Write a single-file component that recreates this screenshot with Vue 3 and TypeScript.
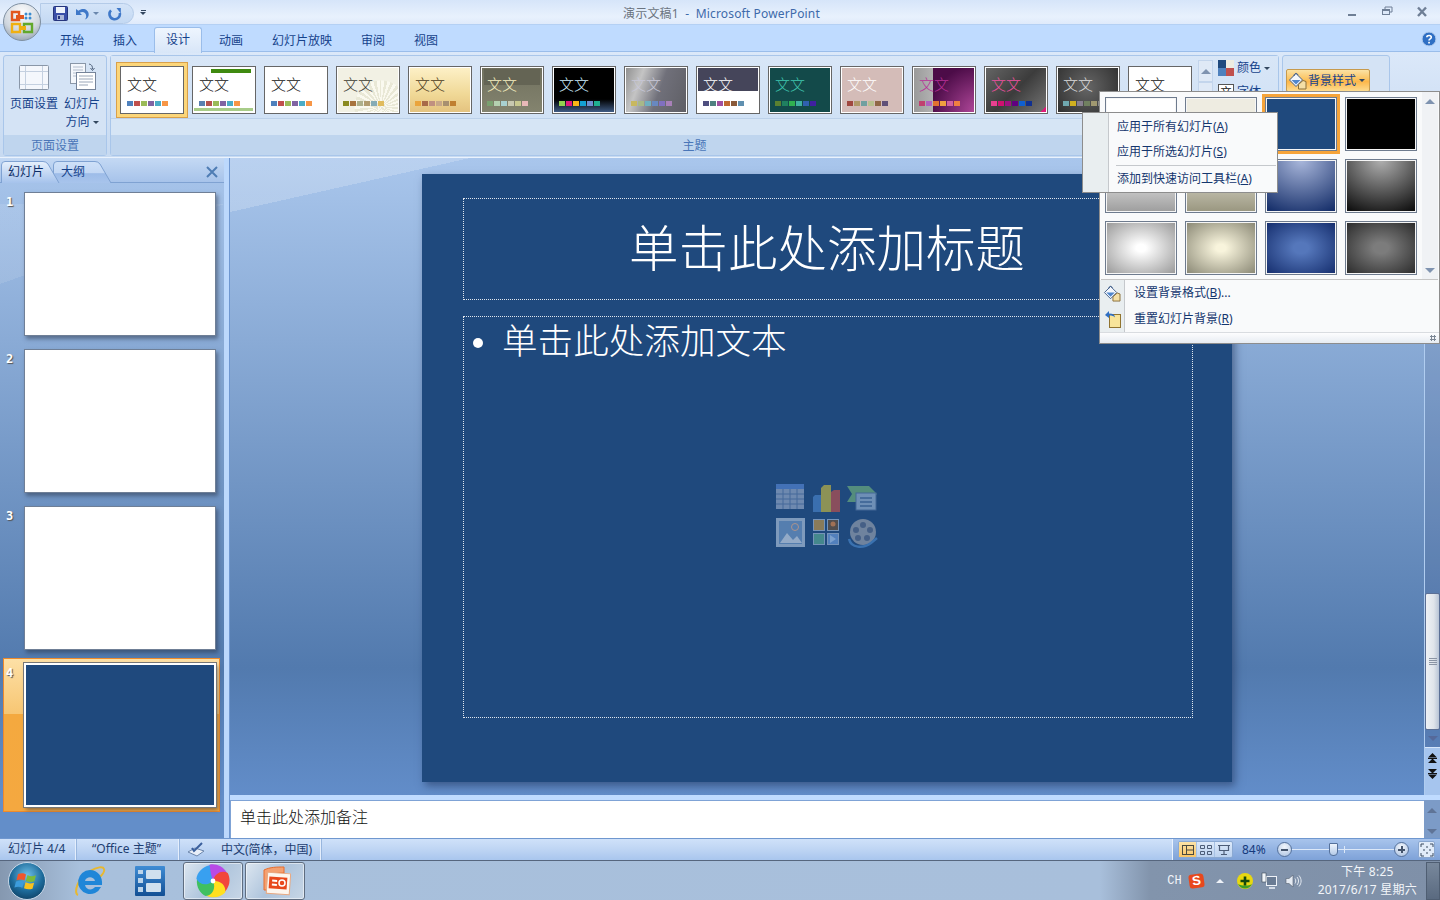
<script setup lang="ts">
interface Theme {
  bg: string
  color: string
  swatches: string[]
}

const office = ['#4f81bd', '#c0504d', '#9bbb59', '#8064a2', '#4bacc6', '#f79646']

const themes: Theme[] = [
  { bg: '#fff', color: '#111', swatches: office },
  { bg: 'linear-gradient(#3f8a10,#3f8a10) 18px 2px/40px 4px no-repeat, linear-gradient(#a8cc88,#a8cc88) 0 41px/60px 3px no-repeat, #fff', color: '#111', swatches: ['#5a80b0', '#b5524f', '#9bbb59', '#8064a2', '#4bacc6', '#f79646'] },
  { bg: '#fff', color: '#111', swatches: office },
  { bg: 'radial-gradient(circle at 44px 40px, transparent 26px, #f2f1e4 27px), repeating-conic-gradient(from 0deg at 44px 40px, #faf9ef 0 7deg, #e9e8d6 7deg 14deg)', color: '#3a3a30', swatches: ['#8a8a20', '#a8743f', '#aeb08c', '#b19c6f', '#86acb6', '#e0bb5c'] },
  { bg: 'linear-gradient(#fdf1c8, #f0d896 60%, #e4c27e)', color: '#4a3a20', swatches: ['#eaa43c', '#a86a48', '#c09080', '#c8a888', '#a89070', '#c07f30'] },
  { bg: 'linear-gradient(#62625200, #62625200), linear-gradient(#646454,#646454) 3px 2px/56px 16px no-repeat, linear-gradient(#70705e, #84846f)', color: '#f6f0c0', swatches: ['#7aa070', '#b4d0b0', '#a8d0d0', '#c8c8b0', '#c8c890', '#e8b8b8'] },
  { bg: 'linear-gradient(#000 70%, #44628e)', color: '#cfefff', swatches: ['#92d050', '#e01a7c', '#fbb516', '#14a0d4', '#6f8fd0', '#20b090'] },
  { bg: 'linear-gradient(110deg, #8d8d8d, #c4c4c4 25%, #70707a 55%, #5e5e64)', color: '#c8c8d8', swatches: ['#c8b860', '#a8b888', '#70b0c0', '#6888c0', '#8070c0', '#a880b8'] },
  { bg: 'linear-gradient(#45455a 52%, #fff 52%)', color: '#fff', swatches: ['#4f4f80', '#4f8080', '#a050a0', '#c06830', '#8a5a3a', '#6090b0'] },
  { bg: '#134a4a', color: '#40c8b0', swatches: ['#5a8030', '#208060', '#30b050', '#40b0a0', '#3060b0', '#4020a0'] },
  { bg: '#d4bcb8', color: '#fff', swatches: ['#a04840', '#b09868', '#70a0a0', '#b8c090', '#906848', '#605078'] },
  { bg: 'radial-gradient(circle at 46px 46px, #b84ca0, #4c0c48 75%) 20px 0/44px 48px no-repeat, linear-gradient(90deg, #999, #e8e8e8)', color: '#b83098', swatches: ['#c04070', '#b060c0', '#e07030', '#f0a040', '#d060a0', '#f08040'] },
  { bg: 'linear-gradient(315deg, #e01878 7%, transparent 7%), linear-gradient(135deg, #666, #3c3c3c 50%, #777)', color: '#f050a0', swatches: ['#e84090', '#d01070', '#a01080', '#600080', '#1060d0', '#103090'] },
  { bg: 'radial-gradient(circle at 30px 20px, #666, #2c2c2c)', color: '#ddd', swatches: ['#70a8b0', '#d0b020', '#888090', '#708060', '#a09870', '#888'] },
  { bg: '#fff', color: '#111', swatches: office },
]

const backgrounds = [
  '#fff',
  '#eeece1',
  '#1f497d',
  '#000',
  'linear-gradient(#fff, #9d9d9d)',
  'linear-gradient(#eeece1, #99967f)',
  'radial-gradient(ellipse 90% 110% at 50% 0, #aab8dc, #17306b)',
  'radial-gradient(ellipse 90% 110% at 50% 0, #b0b0b0, #111)',
  'radial-gradient(ellipse at 50% 50%, #fff 10%, #9c9c9c 95%)',
  'radial-gradient(ellipse at 50% 50%, #f8f4dc 10%, #8d8b78 95%)',
  'radial-gradient(ellipse at 50% 50%, #5577bb 15%, #173070 95%)',
  'radial-gradient(ellipse at 50% 50%, #7c7c7c 15%, #2e2e2e 95%)',
]

const petals = [
  { color: '#b94ae6', angle: 0 },
  { color: '#f2463c', angle: 72 },
  { color: '#ffe01f', angle: 144 },
  { color: '#3fc060', angle: 216 },
  { color: '#38a0f0', angle: 288 },
]

const tabs = ['开始', '插入', '设计', '动画', '幻灯片放映', '审阅', '视图']
const slides = [1, 2, 3, 4]
</script>

<template>
  <div class="window">
    <header class="titlebar">
      <div class="qat">
        <svg class="qat-icon" width="15" height="15" viewBox="0 0 15 15">
          <rect x="0.5" y="0.5" width="14" height="14" rx="1" fill="#3a4fa8" stroke="#26357c" />
          <rect x="3" y="1" width="9" height="6" fill="#eef3fb" />
          <rect x="4" y="9" width="7" height="5" fill="#aab6d8" />
          <rect x="5" y="10" width="2" height="3" fill="#26357c" />
        </svg>
        <svg class="qat-icon" width="14" height="14" viewBox="0 0 14 14">
          <path d="M1 2v6h6L4.8 5.8C7.4 4 11 5.2 11.2 9c.1 1.400-.5 2.600-1.400 3.600 2.600-.8 4-3 3.900-5.400C13.400 2.600 8 .2 3.400 3.800z" fill="#3f78c8" />
        </svg>
        <i class="caret qat-caret"></i>
        <svg class="qat-icon redo" width="14" height="14" viewBox="0 0 14 14">
          <path d="M3 3.400A5.200 5.200 0 1 0 11.800 6" fill="none" stroke="#3f78c8" stroke-width="2.600" />
          <path d="M8.500 1 12.800 1 12.800 6.500z" fill="#3f78c8" />
        </svg>
      </div>
      <span class="customize"><b></b><i class="caret dark"></i></span>
      <div class="title"><span class="doc">演示文稿1</span>&nbsp;&nbsp;-&nbsp;&nbsp;Microsoft PowerPoint</div>
      <div class="win-controls">
        <svg width="14" height="14" viewBox="0 0 14 14"><rect x="3" y="9" width="8" height="2" fill="#6f7f96" /></svg>
        <svg width="14" height="14" viewBox="0 0 14 14"><path d="M5 4V2h7v5h-2" fill="none" stroke="#6f7f96" /><rect x="2.500" y="4.500" width="7" height="5" fill="#dce8f8" stroke="#6f7f96" /><rect x="2" y="4" width="8" height="2" fill="#6f7f96" /></svg>
        <svg width="14" height="14" viewBox="0 0 14 14"><path d="M3 2.500 11 11M11 2.500 3 11" stroke="#6f7f96" stroke-width="2.400" /></svg>
      </div>
    </header>

    <nav class="tabs">
      <span v-for="tab in tabs" :key="tab" class="tab" :class="{ active: tab === '设计' }">{{ tab }}</span>
      <svg class="help" width="16" height="16" viewBox="0 0 16 16">
        <circle cx="8" cy="8" r="7" fill="#2f6fc4" stroke="#b8d0f0" />
        <path d="M5.800 6.200C6 4 10.300 4 10.300 6.300c0 1.600-2.300 1.500-2.300 3.200" fill="none" stroke="#fff" stroke-width="1.600" />
        <rect x="7.200" y="10.800" width="1.700" height="1.700" fill="#fff" />
      </svg>
    </nav>

    <section class="ribbon">
      <div class="group group-page">
        <div class="group-body page-tools">
          <div class="tool">
            <svg width="32" height="28" viewBox="0 0 32 28">
              <rect x="1.500" y="2.500" width="29" height="24" rx="1" fill="#f4f7fc" stroke="#8a97a8" />
              <path d="M7.500 3v23M24.500 3v23M2 8.500h28M2 21.500h28" stroke="#c4d0e0" fill="none" />
            </svg>
            <span>页面设置</span>
          </div>
          <div class="tool">
            <svg width="32" height="30" viewBox="0 0 32 30">
              <rect x="4.500" y="1.500" width="15" height="20" fill="#f4f7fc" stroke="#8a97a8" />
              <path d="M7 5h10M7 8h10M7 11h10M7 14h8" stroke="#b2bccb" />
              <rect x="10.500" y="10.500" width="19" height="17" fill="#fff" stroke="#76849a" />
              <path d="M13 14h14M13 17h14M13 20h14M13 23h9" stroke="#9aa6b8" />
              <path d="M23 2c3 .5 3.500 2.500 3.500 5M24.500 6l2 2.500L28.500 6" fill="none" stroke="#51637e" />
            </svg>
            <span>幻灯片<br />方向 <i class="caret dark"></i></span>
          </div>
        </div>
        <div class="group-label">页面设置</div>
      </div>

      <div class="group group-themes">
        <div class="group-body theme-row">
          <div
            v-for="(theme, index) in themes"
            :key="index"
            class="thumb"
            :class="{ selected: index === 0 }"
            :style="{ background: theme.bg, color: theme.color }"
          >
            <span class="thumb-text">文文</span>
            <div class="swatches">
              <i v-for="c in theme.swatches" :key="c" :style="{ background: c }"></i>
            </div>
          </div>
          <div class="gallery-arrows">
            <span class="arrow-btn"><i class="tri up"></i></span>
            <span class="arrow-btn"><i class="tri down"></i></span>
          </div>
          <div class="theme-options">
            <div class="theme-option">
              <svg width="16" height="16" viewBox="0 0 16 16">
                <rect width="16" height="16" fill="#fff" />
                <rect width="8" height="8" fill="#1f497d" />
                <rect x="8" width="8" height="8" fill="#eeece1" />
                <rect y="8" width="8" height="8" fill="#4f81bd" />
                <rect x="8" y="8" width="8" height="8" fill="#c0504d" />
              </svg>
              <span>颜色</span><i class="caret dark"></i>
            </div>
            <div class="theme-option">
              <span class="font-box">文</span>
              <span>字体</span><i class="caret dark"></i>
            </div>
          </div>
        </div>
        <div class="group-label">主题</div>
      </div>

      <div class="group group-bg">
        <div class="group-body">
          <button class="bg-btn">
            <svg width="19" height="18" viewBox="0 0 19 18">
              <path d="M8 1.500 1.500 8 8 14.500 14.500 8z" fill="#f4f7fc" stroke="#3f5c88" />
              <path d="M3.500 8h9L8 12.500z" fill="#4f86cc" />
              <path d="M6 4c0-3 3-3.500 4-1" fill="none" stroke="#3f5c88" />
              <path d="M10.500 12.500 15 8.500l3 1v7.500h-7.500z" fill="#f4dfa6" stroke="#8a6f3a" />
            </svg>
            <span>背景样式</span><i class="caret dark"></i>
          </button>
        </div>
      </div>
    </section>

    <main class="workspace">
      <aside class="side-pane">
        <div class="pane-tabs">
          <div class="pane-tab">
            <svg class="tab-shape" width="59" height="22" viewBox="0 0 59 22">
              <defs>
                <linearGradient id="tabOn" x1="0" y1="0" x2="0" y2="1">
                  <stop offset="0" stop-color="#e6f0fc" />
                  <stop offset="1" stop-color="#a6c3ec" />
                </linearGradient>
              </defs>
              <path d="M.5 22V4Q.5.500 4 .500H42Q45 .500 47 3L58 22" fill="url(#tabOn)" stroke="#7fa2d2" />
            </svg>
            <span class="on">幻灯片</span>
          </div>
          <div class="pane-tab second">
            <svg class="tab-shape" width="59" height="22" viewBox="0 0 59 22">
              <defs>
                <linearGradient id="tabOff" x1="0" y1="0" x2="0" y2="1">
                  <stop offset="0" stop-color="#cfe1f8" />
                  <stop offset=".55" stop-color="#c2d7f4" />
                  <stop offset=".56" stop-color="#9dbce8" />
                  <stop offset="1" stop-color="#a8c4ec" />
                </linearGradient>
              </defs>
              <path d="M.5 22V4Q.5.500 4 .500H42Q45 .500 47 3L58 22" fill="url(#tabOff)" stroke="#7fa2d2" />
            </svg>
            <span>大纲</span>
          </div>
          <svg class="pane-close" width="12" height="12" viewBox="0 0 12 12">
            <path d="M1 1 11 11M11 1 1 11" stroke="#4f7db4" stroke-width="2" />
          </svg>
        </div>
        <ul class="slide-list">
          <li v-for="n in slides" :key="n" class="slide-item" :class="{ current: n === 4 }">
            <span class="slide-num">{{ n }}</span>
            <div class="slide-thumb"></div>
          </li>
        </ul>
      </aside>
      <div class="splitter"></div>
      <div class="editor">
        <div class="editor-top">
          <div class="canvas">
            <article class="slide">
              <div class="holder holder-title">单击此处添加标题</div>
              <div class="holder holder-body">
                <div class="body-line"><i class="bullet"></i>单击此处添加文本</div>
                <div class="content-icons">
                  <svg width="104" height="66" viewBox="0 0 104 66">
                    <rect x="1" y="1" width="28" height="25" fill="#7c95b8" />
                    <rect x="1" y="1" width="28" height="5" fill="#4a78c0" />
                    <path d="M1 11h28M1 16h28M1 21h28M8 6v20M15 6v20M22 6v20" stroke="#4d6f9f" />
                    <path d="M38 14l2-2h6v17h-8z" fill="#3f76b8" />
                    <path d="M46 5l3-3h7v27H46z" fill="#9f9f50" />
                    <path d="M56 9l3-2h6v22h-9z" fill="#9c5058" />
                    <path d="M72 3h22l8 8-8 8H72l5-8z" fill="#5e9a7e" />
                    <rect x="81" y="10" width="20" height="17" fill="#7c9cc0" stroke="#486d9c" />
                    <path d="M85 15h12M85 19h12M85 23h12" stroke="#3e6596" stroke-width="1.500" />
                    <rect x="1" y="35" width="29" height="29" fill="#8fa9c8" />
                    <rect x="4" y="38" width="23" height="23" fill="#5f88b8" />
                    <path d="M5 60l7-10 6 7 4-4 5 7z" fill="#a8bcd4" />
                    <circle cx="20" cy="44" r="3.500" fill="none" stroke="#c4a090" />
                    <rect x="38.500" y="36.500" width="11" height="11" fill="#9c8454" stroke="#84a0c4" />
                    <rect x="52.500" y="36.500" width="11" height="11" fill="#5a5048" stroke="#84a0c4" />
                    <circle cx="58" cy="41" r="2.500" fill="#b87850" />
                    <rect x="38.500" y="50.500" width="11" height="11" fill="#4c9490" stroke="#84a0c4" />
                    <rect x="52.500" y="50.500" width="11" height="11" fill="#5b8ac8" stroke="#84a0c4" />
                    <path d="M55 52v8l6-4z" fill="#8cb0dc" />
                    <circle cx="88" cy="49" r="13" fill="#7e8ea4" />
                    <circle cx="88" cy="42" r="3" fill="#4c6488" /><circle cx="95" cy="47" r="3" fill="#4c6488" />
                    <circle cx="92" cy="55" r="3" fill="#4c6488" /><circle cx="83" cy="55" r="3" fill="#4c6488" />
                    <circle cx="81" cy="47" r="3" fill="#4c6488" />
                    <path d="M74 56c2 9 14 10 22 4l6-5" fill="none" stroke="#3f78b8" stroke-width="2.500" />
                  </svg>
                </div>
              </div>
            </article>
          </div>
          <div class="scrollbar">
            <div class="scroll-track"><span class="scroll-thumb"><b></b></span></div>
            <div class="scroll-down"><i class="tri down"></i></div>
            <div class="page-jump">
              <svg width="9" height="10" viewBox="0 0 9 10"><path d="M4.500 0 9 4.500H0zM0 5h9v1H0zM4.500 5.500 9 10H0z" fill="#111" /></svg>
              <svg width="9" height="10" viewBox="0 0 9 10"><path d="M0 0h9L4.500 4.500zM0 4h9v1H0zM0 5.500h9L4.500 10z" fill="#111" /></svg>
            </div>
          </div>
        </div>
        <div class="notes-row">
          <div class="notes">单击此处添加备注</div>
          <div class="notes-scroll"><i class="tri up"></i><i class="tri down"></i></div>
        </div>
      </div>
    </main>

    <footer class="statusbar">
      <span class="cell cell-count">幻灯片 4/4</span>
      <span class="cell cell-theme">“Office 主题”</span>
      <span class="cell cell-lang">
        <svg width="18" height="16" viewBox="0 0 18 16">
          <path d="M1 10l7-4 9 3-7 5z" fill="#e8eef8" stroke="#6c86ac" />
          <path d="M5 6l2 3 8-8" fill="none" stroke="#3a5f9c" stroke-width="2" />
        </svg>
        <span>中文(简体，中国)</span>
      </span>
      <div class="status-right">
        <div class="views">
          <span class="view on">
            <svg width="14" height="12" viewBox="0 0 14 12"><rect x="1.500" y="1.500" width="11" height="9" fill="none" stroke="#4a4a40" /><path d="M5.500 1v10M6 6h6" stroke="#4a4a40" /></svg>
          </span>
          <span class="view">
            <svg width="14" height="12" viewBox="0 0 14 12"><path d="M1.500 1.500h4v3h-4zM8.500 1.500h4v3h-4zM1.500 7.500h4v3h-4zM8.500 7.500h4v3h-4z" fill="none" stroke="#4c5d78" /></svg>
          </span>
          <span class="view">
            <svg width="14" height="12" viewBox="0 0 14 12"><path d="M1 1.500h12M2.500 2v4.500h9V2M7 7v3M4 10.500h6" fill="none" stroke="#4c5d78" stroke-width="1.200" /></svg>
          </span>
        </div>
        <span class="zoom-val">84%</span>
        <span class="round-btn"><b></b></span>
        <div class="zoom-slider"><span class="zoom-tick"></span><span class="zoom-thumb"></span></div>
        <span class="round-btn plus"><b></b></span>
        <span class="fit-btn">
          <svg width="14" height="14" viewBox="0 0 14 14"><path d="M1 4V1h3M10 1h3v3M13 10v3h-3M4 13H1v-3M7 3v2M7 9v2M3 7h2M9 7h2" fill="none" stroke="#3a4a60" /></svg>
        </span>
      </div>
    </footer>

    <footer class="taskbar">
      <svg class="start" width="40" height="40" viewBox="0 0 40 40">
        <defs>
          <radialGradient id="orb" cx=".5" cy=".35" r=".7">
            <stop offset="0" stop-color="#6fc0e8" />
            <stop offset=".6" stop-color="#1c6a9a" />
            <stop offset="1" stop-color="#0d3d60" />
          </radialGradient>
        </defs>
        <circle cx="20" cy="20" r="18.500" fill="url(#orb)" stroke="#c8d8e8" />
        <path d="M11 13c3-1 6-1 8 .5l-1.500 6c-2.500-1.300-5-1.400-8-.3z" fill="#f0562c" />
        <path d="M20.500 14c2.500 1.500 5 1.600 8.500.3l-1.600 6c-3 1-5.500 1-8.500-.4z" fill="#7cbb3a" />
        <path d="M9 20.500c3-1 5.500-1 8 .3l-1.600 6c-2.500-1.300-5-1.300-8-.3z" fill="#3c9cdc" />
        <path d="M18.500 21.300c2.800 1.400 5.500 1.500 8.600.4l-1.600 6c-3 1-5.600.8-8.500-.5z" fill="#f9c21e" />
      </svg>
      <div class="task-app ie">
        <svg width="36" height="36" viewBox="0 0 36 36">
          <path d="M6 32C1 30 6 14 18 8c7-4 13-5 14-2 1 2-2 6-4 8" fill="none" stroke="#e8b830" stroke-width="2" />
          <path d="M18 7a12 12 0 1 0 11 17h-6c-3 4-9 3-10-2h17c1-8-4-15-12-15zm-5 11c1-5 9-5 10 0z" fill="#1f86d8" fill-rule="evenodd" />
        </svg>
      </div>
      <div class="task-app film">
        <svg width="32" height="32" viewBox="0 0 32 32">
          <defs>
            <linearGradient id="filmBody" x1="0" y1="0" x2="0" y2="1">
              <stop offset="0" stop-color="#3f8cd4" />
              <stop offset="1" stop-color="#124f94" />
            </linearGradient>
          </defs>
          <rect x="1" y="1" width="30" height="30" rx="1" fill="url(#filmBody)" />
          <rect x="12" y="5" width="15" height="9" rx="1" fill="#d0e0ee" />
          <rect x="12" y="18" width="15" height="9" rx="1" fill="#d0e0ee" />
          <rect x="4" y="5" width="5" height="4" fill="#bcd4ea" /><rect x="4" y="13" width="5" height="5" fill="#bcd4ea" /><rect x="4" y="22" width="5" height="5" fill="#bcd4ea" />
        </svg>
      </div>
      <div class="task-btn">
        <svg width="34" height="34" viewBox="-17 -17 34 34">
          <path
            v-for="petal in petals"
            :key="petal.color"
            d="M0 0C-7-4-8-12-3-16.500 3-17.500 10-15 14-8 9-6 4-3 0 0z"
            :fill="petal.color"
            :transform="`rotate(${petal.angle})`"
          />
          <circle r="2.400" fill="#fff" />
        </svg>
      </div>
      <div class="task-btn">
        <svg width="32" height="30" viewBox="0 0 32 30">
          <path d="M5 4c6-3 13-3 20-3v6H12v17H5z" fill="#f4a070" stroke="#e86c2c" />
          <rect x="8" y="7" width="23" height="21" fill="#fdf6ee" stroke="#e8a880" transform="rotate(4 19 17)" />
          <rect x="10" y="11" width="18" height="12" fill="#e8481c" transform="rotate(4 19 17)" />
          <rect x="13" y="14" width="5" height="2" fill="#fff" transform="rotate(4 19 17)" />
          <rect x="13" y="18" width="5" height="2" fill="#fff" transform="rotate(4 19 17)" />
          <circle cx="23" cy="17" r="3" fill="none" stroke="#fff" stroke-width="1.500" />
        </svg>
      </div>
      <div class="tray">
        <span class="lang">CH</span>
        <span class="sogou">S</span>
        <i class="tray-up"></i>
        <svg width="18" height="18" viewBox="0 0 18 18">
          <circle cx="9" cy="9" r="8" fill="#e8d810" />
          <path d="M2 12c3 6 11 6 14 0-3 2-10 2-14 0z" fill="#3c9c28" />
          <path d="M9 4.500v9M4.500 9h9" stroke="#14480c" stroke-width="2.600" />
        </svg>
        <svg width="18" height="18" viewBox="0 0 18 18">
          <rect x="6.500" y="4.500" width="10" height="9" fill="#6a7c94" stroke="#eef2f8" />
          <path d="M9 16h6" stroke="#eef2f8" stroke-width="1.500" />
          <rect x="2" y="1" width="4" height="9" fill="#f0f4f8" stroke="#3a4656" stroke-width=".6" />
        </svg>
        <svg width="18" height="18" viewBox="0 0 18 18">
          <path d="M2 6.500h3L9 3v12l-4-3.500H2z" fill="#e4eaf2" stroke="#55606e" stroke-width=".6" />
          <path d="M11 6.500c1 1.500 1 3.500 0 5M13 5c2 2.500 2 5.500 0 8M15 3.500c2.800 3.500 2.800 7.500 0 11" fill="none" stroke="#e4eaf2" />
        </svg>
        <div class="clock"><span>下午 8:25</span><span>2017/6/17 星期六</span></div>
      </div>
      <div class="show-desktop"></div>
    </footer>

    <!-- orb and the two menus float over the window -->
    <svg class="office-orb" width="44" height="44" viewBox="0 0 44 44">
      <defs>
        <radialGradient id="pearl" cx=".5" cy=".25" r=".85">
          <stop offset="0" stop-color="#fdfdfd" />
          <stop offset=".6" stop-color="#cfd6de" />
          <stop offset="1" stop-color="#8a97a5" />
        </radialGradient>
      </defs>
      <circle cx="22" cy="22" r="18.500" fill="url(#pearl)" stroke="#7f90a2" />
      <path d="M12 12h7v8h-7z" fill="none" stroke="#e2571e" stroke-width="2.400" />
      <path d="M16 15h8v4h-8z" fill="#e2571e" />
      <circle cx="26" cy="14" r="1.500" fill="#3a8cd0" /><circle cx="30" cy="14" r="1.500" fill="#3a8cd0" /><circle cx="26" cy="18" r="1.500" fill="#3a8cd0" /><circle cx="30" cy="18" r="1.500" fill="#3a8cd0" />
      <path d="M24 24h8v8h-8z" fill="none" stroke="#62a82c" stroke-width="2.400" />
      <path d="M12 24h8v8h-8z" fill="none" stroke="#f0b010" stroke-width="2.400" />
      <path d="M20 26h6v4h-6z" fill="#f0b010" />
    </svg>

    <div class="bg-popup">
      <div class="bg-gallery">
        <div class="bg-grid">
          <div
            v-for="(bg, index) in backgrounds"
            :key="index"
            class="bg-cell"
            :class="{ selected: index === 2 }"
            :style="{ background: bg }"
          ></div>
        </div>
        <div class="bg-scroll"><i class="tri up"></i><i class="tri down"></i></div>
      </div>
      <div class="bg-menu">
        <div class="bg-item">
          <span class="bg-item-icon">
            <svg width="18" height="17" viewBox="0 0 19 18">
              <path d="M8 1.500 1.500 8 8 14.500 14.500 8z" fill="#f4f7fc" stroke="#3f5c88" />
              <path d="M3.500 8h9L8 12.500z" fill="#4f86cc" />
              <path d="M6 4c0-3 3-3.500 4-1" fill="none" stroke="#3f5c88" />
              <path d="M10.500 12.500 15 8.500l3 1v7.500h-7.500z" fill="#f4dfa6" stroke="#8a6f3a" />
            </svg>
          </span>
          <span>设置背景格式(<u>B</u>)...</span>
        </div>
        <div class="bg-item">
          <span class="bg-item-icon">
            <svg width="17" height="18" viewBox="0 0 17 18">
              <rect x="5.500" y="4.500" width="11" height="13" fill="#f8e49a" stroke="#917430" />
              <path d="M1 5l4-4v2.500c4 0 6 1.500 6 4-1-1.500-3-2-6-2V8z" fill="#2f6fc4" />
            </svg>
          </span>
          <span>重置幻灯片背景(<u>R</u>)</span>
        </div>
      </div>
      <div class="bg-footer"><i></i></div>
    </div>

    <div class="context-menu">
      <div class="ctx-item">应用于所有幻灯片(<u>A</u>)</div>
      <div class="ctx-item">应用于所选幻灯片(<u>S</u>)</div>
      <div class="ctx-sep"></div>
      <div class="ctx-item last">添加到快速访问工具栏(<u>A</u>)</div>
    </div>
  </div>
</template>

<style>
html, body {
  margin: 0;
  overflow: hidden;
}
</style>

<style scoped>
.window {
  position: relative;
  width: 1440px;
  height: 900px;
  display: flex;
  flex-direction: column;
  overflow: hidden;
  font: 12px/1 "Noto Sans", "Noto Sans CJK SC", sans-serif;
  color: #15428b;
}
.caret {
  display: inline-block;
  width: 0;
  height: 0;
  border: 3px solid transparent;
  border-top: 3px solid #6a87ad;
  border-bottom: 0;
  vertical-align: middle;
}
.caret.dark { border-top-color: #33475f; }
.tri {
  display: block;
  width: 0;
  height: 0;
  border: 5px solid transparent;
}
.tri.up { border-top: 0; border-bottom: 5px solid #7f93b0; }
.tri.down { border-bottom: 0; border-top: 5px solid #7f93b0; }

/* title bar */
.titlebar {
  height: 25px;
  flex: none;
  display: flex;
  align-items: center;
  background: linear-gradient(#d6e5f9, #e8f1fd 70%, #dfeafb);
  border-bottom: 1px solid #b4d0f4;
  box-sizing: border-box;
}
.qat {
  margin: 3px 0 0 40px;
  width: 94px;
  height: 21px;
  box-sizing: border-box;
  padding-left: 12px;
  display: flex;
  align-items: center;
  background: linear-gradient(#d4e4f8, #c4d9f3);
  border: 1px solid #b4cbe8;
  border-radius: 0 11px 11px 0;
}
.qat-icon { flex: none; margin-right: 7px; }
.qat-caret { margin: 0 9px 0 -3px; }
.redo { margin-right: 0; }
.customize {
  margin-left: 3px;
  width: 12px;
  display: flex;
  flex-direction: column;
  align-items: center;
  gap: 1px;
}
.customize b { width: 5px; height: 1px; background: #33475f; }
.title {
  position: absolute;
  left: 0;
  right: 0;
  top: 8px;
  text-align: center;
  padding-left: 3px;
  color: #3e6aaa;
  white-space: nowrap;
  font-size: 12px;
  letter-spacing: .15px;
}
.doc { color: #6b7480; }
.win-controls {
  margin-left: auto;
  width: 95px;
  padding-right: 11px;
  box-sizing: border-box;
  display: flex;
  justify-content: space-between;
}

/* tabs */
.tabs {
  height: 27px;
  flex: none;
  position: relative;
  display: flex;
  align-items: flex-end;
  gap: 5px;
  padding-left: 48px;
  background: #bfdbff;
  border-bottom: 1px solid #9abdea;
  box-sizing: border-box;
  color: #15428b;
}
.tab {
  padding: 0 12px;
  height: 25px;
  line-height: 29px;
  box-sizing: border-box;
  white-space: nowrap;
}
.tab.active {
  position: relative;
  z-index: 1;
  background: linear-gradient(#eef5fe, #d8e6f8);
  border: 1px solid #9abdea;
  border-bottom: 0;
  border-radius: 3px 3px 0 0;
  padding: 0 11px;
  margin-bottom: -2px;
  height: 26px;
  line-height: 24px;
  width: 48px;
}
.help { position: absolute; right: 3px; top: 6px; }

/* ribbon */
.ribbon {
  height: 106px;
  flex: none;
  display: flex;
  gap: 3px;
  padding: 3px 0 0 3px;
  box-sizing: border-box;
  background: linear-gradient(#dbe8f9, #c7daf1);
  border-bottom: 1px solid #e9f2fd;
}
.group {
  height: 101px;
  display: flex;
  flex-direction: column;
  box-sizing: border-box;
  border: 1px solid #a9c6ea;
  border-radius: 3px;
  background: #d4e3f5;
}
.group-body { flex: 1; min-height: 0; }
.group-label {
  height: 20px;
  line-height: 21px;
  text-align: center;
  background: #bfd5ee;
  color: #4a76b8;
  flex: none;
}
.group-page { width: 104px; }
.page-tools {
  display: flex;
  justify-content: space-between;
  padding: 5px 6px 0 6px;
  color: #15428b;
}
.tool {
  width: 48px;
  display: flex;
  flex-direction: column;
  align-items: center;
  text-align: center;
  line-height: 18px;
  white-space: nowrap;
}
.tool svg { height: 32px; margin-bottom: 2px; }
.tool:last-child { width: 36px; }
.group-themes { width: 1169px; background: #d6e5f5; }
.theme-row {
  display: flex;
  align-items: flex-start;
  gap: 8px;
  padding: 10px 0 0 9px;
  border-bottom: 1px solid #bcd1ea;
  flex: none;
  height: 63px;
  margin-bottom: 16px;
  box-sizing: border-box;
  background: linear-gradient(#d8e6f7, #d0e1f5);
}
.thumb {
  width: 64px;
  height: 48px;
  flex: none;
  box-sizing: border-box;
  border: 1px solid #666;
  outline: 1px solid #fff;
  outline-offset: -2px;
  position: relative;
  display: flex;
  flex-direction: column;
  padding: 8px 0 0 6px;
}
.thumb.selected {
  box-shadow: 0 0 0 3px #fcd67a, 0 0 0 4px #d9a04a;
}
.thumb-text {
  font-size: 15px;
  font-weight: 300;
  line-height: 19px;
  white-space: nowrap;
}
.swatches {
  display: flex;
  gap: 1px;
  margin-top: 7px;
}
.swatches i { width: 6px; height: 5px; }
.gallery-arrows {
  margin: -6px 0 0 -2px;
  display: flex;
  flex-direction: column;
  width: 15px;
}
.arrow-btn {
  height: 20px;
  display: flex;
  align-items: center;
  justify-content: center;
  background: #dfe9f6;
  border: 1px solid #c3d5ec;
}
.theme-options { margin: -6px 0 0 -3px; display: flex; flex-direction: column; gap: 8px; }
.theme-option { display: flex; align-items: center; gap: 3px; height: 16px; color: #15428b; }
.font-box {
  width: 14px;
  height: 14px;
  border: 1px solid #555;
  background: #fff;
  color: #111;
  text-align: center;
  font-size: 11px;
  line-height: 14px;
}
.group-bg { width: 108px; }
.group-bg .group-body { padding: 13px 0 0 3px; }
.bg-btn {
  width: 84px;
  height: 23px;
  padding: 0 0 0 1px;
  display: flex;
  align-items: center;
  gap: 1px;
  border: 1px solid #c79a4c;
  border-radius: 2px;
  background: linear-gradient(#fbe2a4, #fbc25e 45%, #fdb74a 55%, #fddc90);
  color: #15428b;
  font: inherit;
}
.bg-btn .caret { margin-left: 2px; }

/* workspace */
.workspace {
  height: 680px;
  flex: none;
  display: flex;
  background: linear-gradient(#a9c6ec, #527aae 80%, #628dc9) 0 0/100% 637px no-repeat, #638ec9;
}
.side-pane { width: 224px; flex: none; }
.pane-tabs {
  height: 25px;
  position: relative;
  display: flex;
  align-items: flex-end;
  box-sizing: border-box;
  border-bottom: 1px solid #7fa2d2;
  background: linear-gradient(#c4d9f4, #a7c3ea);
  padding-left: 1px;
}
.pane-tab {
  width: 59px;
  height: 22px;
  position: relative;
  z-index: 2;
  margin-bottom: -1px;
  color: #15428b;
}
.pane-tab.second {
  margin-left: -7px;
  z-index: 1;
}
.tab-shape { position: absolute; left: 0; top: 0; }
.pane-tab span {
  position: relative;
  display: block;
  padding-left: 8px;
  line-height: 22px;
}
.pane-tab span.on { padding-left: 7px; color: #0c2c66; }
.pane-close { position: absolute; right: 6px; top: 8px; }
.slide-list {
  list-style: none;
  margin: 0;
  padding: 4px 0 0 3px;
  display: flex;
  flex-direction: column;
  gap: 3px;
  background: linear-gradient(to bottom right, rgba(255, 255, 255, .1) 50%, transparent 50%) 0 21px/224px 80px no-repeat;
}
.slide-item {
  width: 217px;
  height: 154px;
  box-sizing: border-box;
  padding: 4px 0 0 20px;
  position: relative;
  border: 1px solid transparent;
}
.slide-item.current {
  border-color: #ee8a2c;
  background: linear-gradient(#fde0a6, #f7c673 36%, #f4a93f 36%, #f4a840);
}
.slide-num {
  position: absolute;
  left: 2px;
  top: 8px;
  font-weight: bold;
  font-size: 12px;
  color: #fff;
  font-family: "DejaVu Sans Mono", monospace;
  text-shadow: 1px 1px 1px #555;
}
.slide-thumb {
  width: 192px;
  height: 144px;
  box-sizing: border-box;
  background: #fff;
  border: 1px solid #6f7f96;
  box-shadow: 2px 3px 4px rgba(40, 50, 70, .5);
}
.slide-item.current .slide-thumb {
  background: #1f497d;
  border: 2px solid #fff;
  outline: 1px solid #777;
}
.splitter {
  width: 5px;
  flex: none;
  background: #bcd8fc;
  border-right: 1px solid #6f97d0;
  box-sizing: content-box;
}
.editor { width: 1210px; display: flex; flex-direction: column; }
.editor-top { height: 637px; display: flex; flex: none; }
.canvas {
  width: 1195px;
  display: flex;
  justify-content: center;
  padding-top: 16px;
  box-sizing: border-box;
  background: linear-gradient(to bottom right, rgba(255, 255, 255, .2) 50%, transparent 50%) 0 0/240px 54px no-repeat;
}
.slide {
  width: 810px;
  height: 608px;
  flex: none;
  background: #1f497d;
  box-shadow: 3px 4px 8px rgba(30, 50, 90, .55);
  box-sizing: border-box;
  padding: 24px 40px 0 41px;
  color: #fff;
}
.holder {
  border: 1px dotted #dfe6ee;
  box-sizing: border-box;
  width: 730px;
  position: relative;
}
.holder-title {
  height: 102px;
  margin-bottom: 16px;
  padding-right: 2px;
  font-size: 49.500px;
  line-height: 98px;
  text-align: center;
  font-weight: 300;
}
.holder-body {
  height: 402px;
  font-size: 35.600px;
  font-weight: 300;
}
.body-line {
  display: flex;
  align-items: center;
  padding: 1px 0 0 38px;
  line-height: 44px;
  position: relative;
}
.bullet {
  position: absolute;
  left: 9px;
  top: 21px;
  width: 10px;
  height: 10px;
  border-radius: 50%;
  background: #fff;
}
.content-icons {
  position: absolute;
  inset: 0 2px 3px 0;
  display: flex;
  align-items: center;
  justify-content: center;
  opacity: .85;
}
.scrollbar {
  width: 16px;
  flex: none;
  display: flex;
  flex-direction: column;
  box-sizing: border-box;
  border-left: 1px solid #b0cdf0;
  background: rgba(60, 80, 120, .13);
}
.scroll-track {
  flex: 1;
  display: flex;
  flex-direction: column;
  justify-content: flex-end;
}
.scroll-thumb {
  height: 137px;
  display: flex;
  align-items: center;
  justify-content: center;
  background: linear-gradient(90deg, #eef1f5, #dfe4ea 60%, #b8c4d6);
  border: 1px solid #5b6f95;
  border-radius: 2px;
  box-sizing: border-box;
}
.scroll-thumb b { width: 8px; height: 7px; background: repeating-linear-gradient(#8a94a4 0 1px, transparent 1px 2px); }
.scroll-down {
  height: 17px;
  display: flex;
  align-items: center;
  justify-content: center;
  flex: none;
}
.scroll-down .tri.down { border-top-color: #55699a; }
.page-jump {
  height: 48px;
  flex: none;
  display: flex;
  flex-direction: column;
  align-items: center;
  gap: 6px;
  padding-top: 5px;
  box-sizing: border-box;
  border-top: 1px solid #d6e6fb;
  background: #a6c5ee;
}
.notes-row {
  height: 43px;
  flex: none;
  display: flex;
  padding-top: 5px;
  box-sizing: border-box;
  background: #bfdbff;
}
.notes {
  width: 1195px;
  box-sizing: border-box;
  padding: 6px 0 0 9px;
  background: #fff;
  font-size: 16px;
  font-weight: 300;
  line-height: 20px;
  color: #111;
  border-top: 1px solid #7fa3d6;
  border-left: 1px solid #7fa3d6;
}
.notes-scroll {
  width: 16px;
  display: flex;
  flex-direction: column;
  align-items: center;
  justify-content: space-between;
  padding: 8px 0 4px;
  box-sizing: border-box;
  background: #7c9bc7;
}
.notes-scroll .tri.up { border-bottom-color: #5f7497; }
.notes-scroll .tri.down { border-top-color: #5f7497; }

/* status bar */
.statusbar {
  height: 22px;
  flex: none;
  display: flex;
  align-items: stretch;
  box-sizing: border-box;
  border-top: 1px solid #6f97cf;
  background: linear-gradient(#cfe1f9, #c0d6f4 45%, #a9c6ee);
  color: #1d3d70;
  font-size: 12px;
  line-height: 20px;
}
.cell {
  border-right: 1px solid #e4eefc;
  box-shadow: 1px 0 0 #98b6de;
  box-sizing: border-box;
  white-space: nowrap;
}
.cell-count { width: 76px; padding-left: 8px; }
.cell-theme { width: 103px; padding-left: 16px; }
.cell-lang { width: 142px; padding-left: 8px; display: flex; align-items: center; gap: 16px; }
.status-right {
  margin-left: auto;
  width: 268px;
  display: flex;
  align-items: center;
  box-sizing: border-box;
  padding-left: 5px;
  border-left: 1px solid #eaf2fd;
  background: linear-gradient(#a8c4ec, #7ea2d8);
  color: #15397c;
}
.views {
  display: flex;
  height: 17px;
  width: 55px;
  flex: none;
  border: 1px solid #8ba9d2;
  border-radius: 2px;
  background: linear-gradient(#dce9fa, #bcd2ef);
  box-sizing: border-box;
}
.view {
  flex: 1;
  display: flex;
  align-items: center;
  justify-content: center;
  border-right: 1px solid #a8c2e4;
}
.view:last-child { border: 0; }
.view.on { background: linear-gradient(#fbe3a8, #f9c566); }
.zoom-val { margin-left: 9px; width: 35px; flex: none; }
.round-btn {
  width: 15px;
  height: 15px;
  flex: none;
  border-radius: 50%;
  background: radial-gradient(circle at 50% 30%, #f2f6fc, #a9c0e0);
  border: 1px solid #55719b;
  box-sizing: border-box;
  display: flex;
  align-items: center;
  justify-content: center;
  position: relative;
}
.round-btn b { width: 7px; height: 2px; background: #44546c; }
.round-btn.plus b::after {
  content: "";
  display: block;
  width: 2px;
  height: 7px;
  margin: -2.500px 0 0 2.500px;
  background: #44546c;
}
.zoom-slider {
  width: 102px;
  height: 1px;
  flex: none;
  position: relative;
  background: #dce8f8;
}
.zoom-tick {
  position: absolute;
  left: 52px;
  top: -3px;
  width: 1px;
  height: 7px;
  background: #dce8f8;
}
.zoom-thumb {
  position: absolute;
  left: 37px;
  top: -6px;
  width: 9px;
  height: 13px;
  box-sizing: border-box;
  background: linear-gradient(#eef4fc, #b5cbe8);
  border: 1px solid #55719b;
  border-radius: 1px 1px 4px 4px;
}
.fit-btn {
  margin-left: 9px;
  width: 17px;
  height: 17px;
  flex: none;
  box-sizing: border-box;
  border: 1px solid #89a6cf;
  border-radius: 2px;
  background: #e2ecf9;
  display: flex;
  align-items: center;
  justify-content: center;
}

/* taskbar */
.taskbar {
  height: 40px;
  flex: none;
  display: flex;
  align-items: center;
  box-sizing: border-box;
  background: linear-gradient(90deg, #8598b0, #a8c0dc 80px, #a8bfdb 1100px, #8294ac 1150px, #7f90a8);
  border-top: 1px solid #56667e;
  color: #f2f5f9;
}
.start { margin-left: 7px; flex: none; }
.task-app {
  width: 60px;
  flex: none;
  display: flex;
  justify-content: center;
}
.ie { margin-left: 13px; }
.film { margin-right: 3px; }
.task-btn {
  width: 60px;
  height: 38px;
  flex: none;
  margin-right: 2px;
  box-sizing: border-box;
  display: flex;
  align-items: center;
  justify-content: center;
  border: 1px solid #5f6d80;
  border-radius: 3px;
  background: linear-gradient(125deg, #dce6f0, #aec4dc 50%, #c7d6e6);
  box-shadow: inset 0 0 0 1px rgba(255, 255, 255, .5);
}
.tray {
  margin-left: auto;
  display: flex;
  align-items: center;
  gap: 6px;
  white-space: nowrap;
}
.lang { font: 12px/1 "Liberation Mono", monospace; margin-right: 1px; }
.sogou {
  width: 15px;
  height: 14px;
  background: #e8481c;
  color: #fff;
  font: bold 13px/14px "Liberation Sans", sans-serif;
  text-align: center;
  border-radius: 3px;
  transform: rotate(-8deg);
}
.tray-up {
  width: 0;
  height: 0;
  border: 4px solid transparent;
  border-top: 0;
  border-bottom: 4px solid #eef2f8;
  margin: 0 6px;
}
.clock {
  display: flex;
  flex-direction: column;
  align-items: center;
  gap: 6px;
  margin: 0 9px 0 10px;
  font-size: 12px;
  letter-spacing: .25px;
}
.show-desktop {
  width: 14px;
  height: 38px;
  box-sizing: border-box;
  border: 1px solid #4f5e72;
  background: linear-gradient(#78889c, #5a6a80);
}

/* floating */
.office-orb { position: absolute; left: 0; top: 0; }
.bg-popup {
  position: absolute;
  left: 1099px;
  top: 91px;
  width: 341px;
  height: 253px;
  box-sizing: border-box;
  border: 1px solid #8d8d8d;
  background: #f9fafb;
  display: flex;
  flex-direction: column;
}
.bg-gallery {
  height: 187px;
  flex: none;
  display: flex;
  border-bottom: 1px solid #c5c5c5;
  margin: 0 1px;
  box-sizing: content-box;
}
.bg-grid {
  display: grid;
  grid-template-columns: repeat(4, 72px);
  grid-auto-rows: 54px;
  gap: 8px;
  padding: 5px 0 0 4px;
  width: 320px;
  box-sizing: border-box;
}
.bg-cell {
  box-sizing: border-box;
  border: 1px solid #6e7b8e;
  box-shadow: inset 0 0 0 1px #f6f6f6;
}
.bg-cell.selected {
  box-shadow: inset 0 0 0 1px #f6f6f6, 0 0 0 3px #f6a43a;
}
.bg-scroll {
  flex: 1;
  display: flex;
  flex-direction: column;
  align-items: center;
  justify-content: space-between;
  padding: 7px 0 6px;
  background: #f0f2f5;
  margin-left: 1px;
}
.bg-menu { flex: none; height: 52px; color: #14366e; border-bottom: 1px solid #d9dce0; box-sizing: content-box; }
.bg-item {
  display: flex;
  align-items: center;
  height: 26px;
  white-space: nowrap;
}
.bg-item-icon {
  width: 24px;
  height: 26px;
  background: #e9eef0;
  border-right: 1px solid #c5c8cc;
  margin-right: 9px;
  display: flex;
  align-items: center;
  justify-content: center;
  box-sizing: content-box;
}
.bg-footer {
  flex: 1;
  background: linear-gradient(#fdfdfe, #e7ecf2);
  display: flex;
  justify-content: flex-end;
  align-items: flex-end;
}
.bg-footer i {
  width: 6px;
  height: 6px;
  margin: 0 3px 2px 0;
  background: radial-gradient(circle, #7c8794 1px, transparent 1.200px) 0 0/3px 3px;
}
.context-menu {
  position: absolute;
  left: 1082px;
  top: 112px;
  width: 196px;
  height: 81px;
  box-sizing: border-box;
  border: 1px solid #8d8d8d;
  background: linear-gradient(90deg, #e9eef0 25px, #c5c8cc 25px, #c5c8cc 26px, #f9fafb 26px);
  color: #14366e;
  padding-top: 2px;
}
.ctx-item {
  padding-left: 34px;
  height: 25px;
  line-height: 24px;
  white-space: nowrap;
}
.ctx-sep {
  margin: 0 1px 0 33px;
  height: 1px;
  background: #c5c8cc;
}
.ctx-item.last { height: 26px; line-height: 25px; }
</style>
